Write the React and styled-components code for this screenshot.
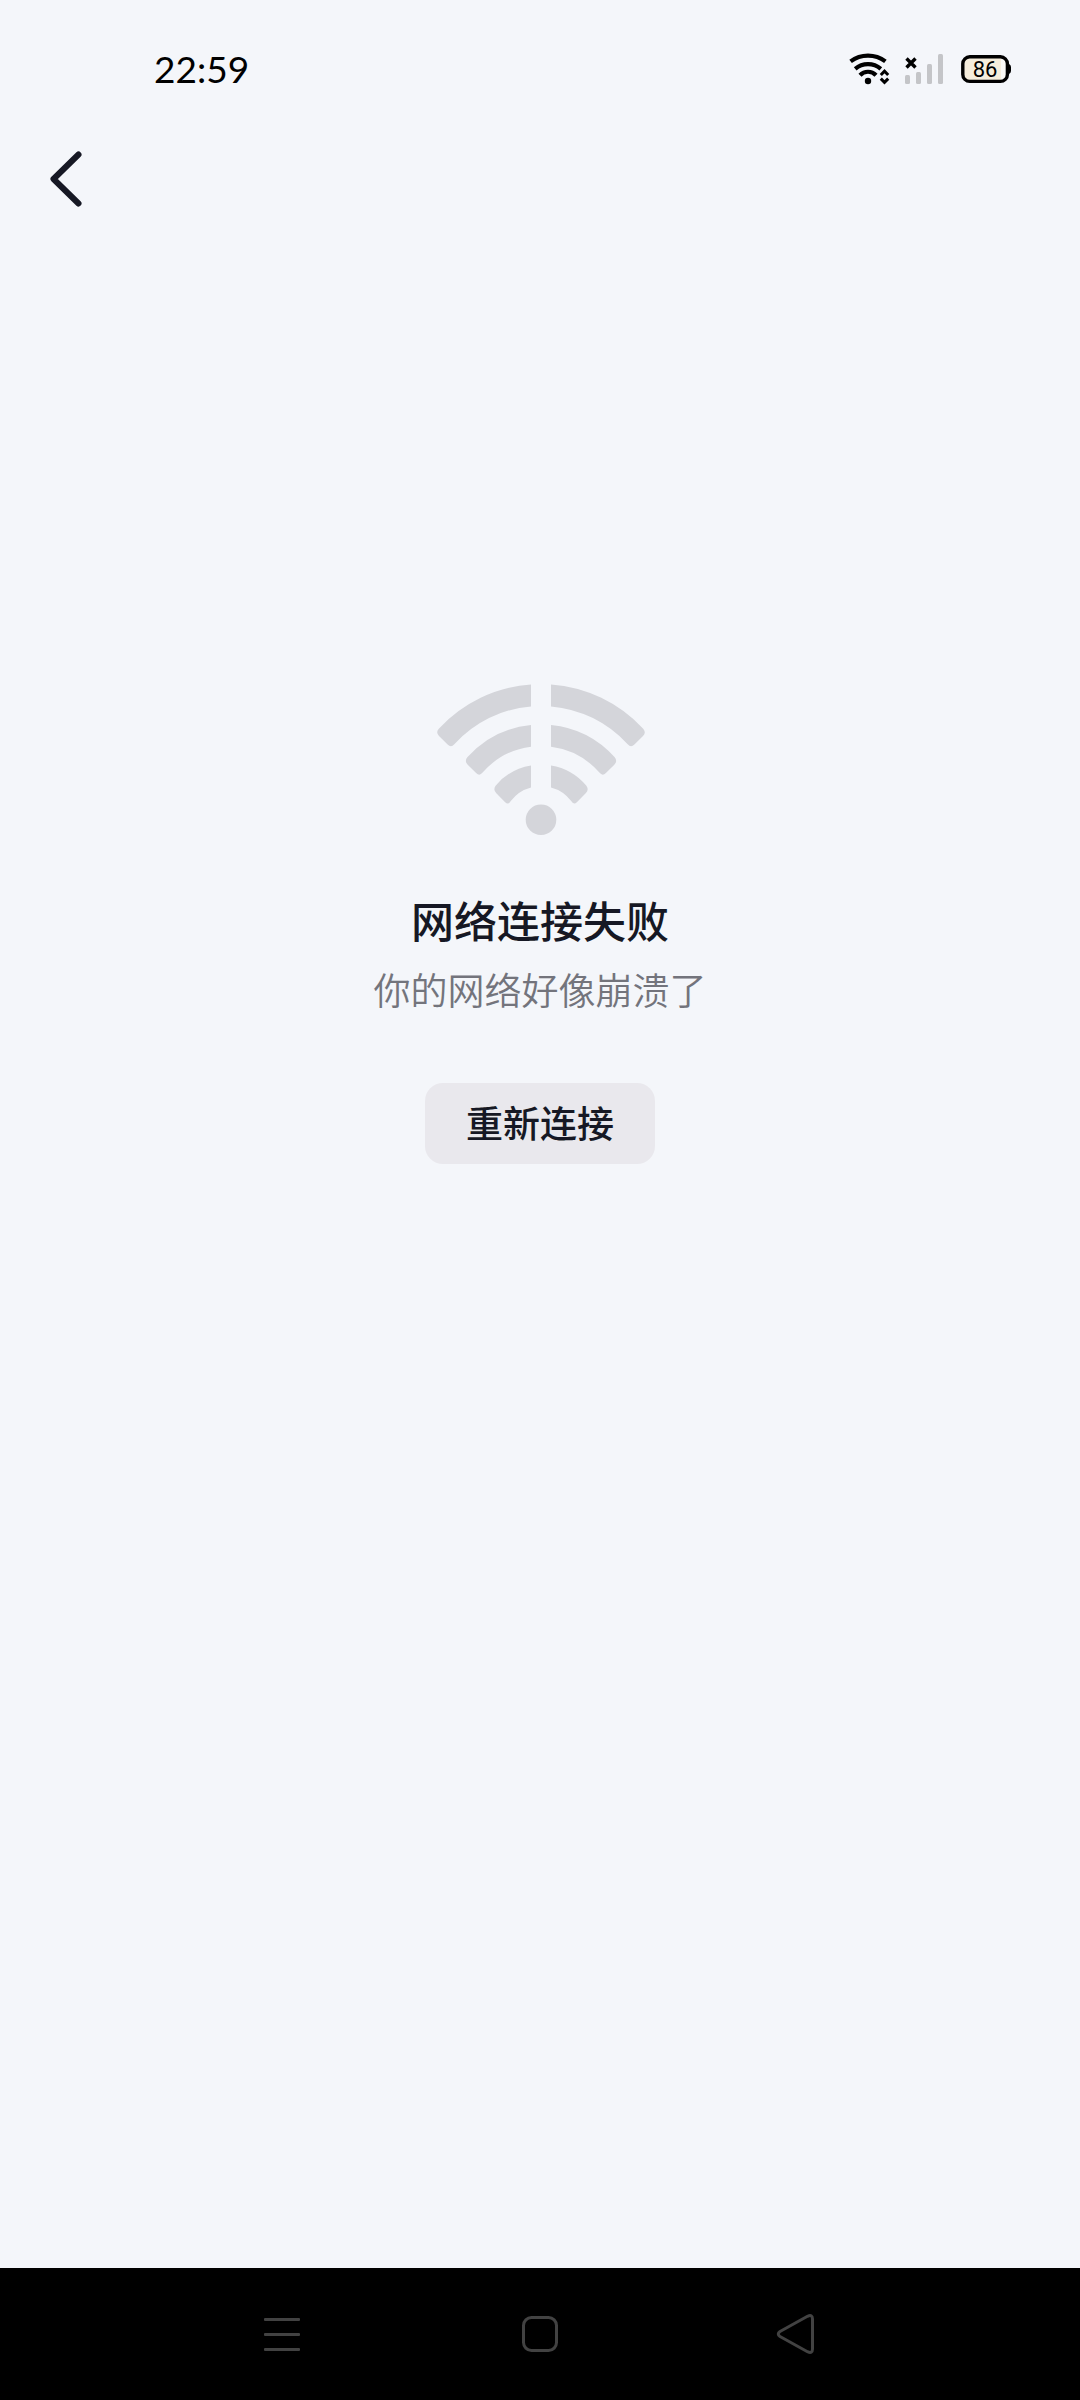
import React from 'react'
import styled, {createGlobalStyle} from 'styled-components'

const GlobalStyle = createGlobalStyle`
  * {
    box-sizing: border-box;
  }
  body {
    margin: 0;
    background: #f4f6fa;
    color: #161824;
    font-family: 'Noto Sans CJK SC', sans-serif;
  }
`

const Page = styled.div`
  min-height: 100vh;
  display: flex;
  flex-direction: column;
`

const StatusBar = styled.div`
  height: 138px;
  padding: 0 68px 0 154px;
  display: flex;
  align-items: center;
  justify-content: space-between;
`

const Clock = styled.time`
  color: #000;
  font-family: Lato, sans-serif;
  font-size: 37px;
  line-height: 44px;
`

const StatusIcons = styled.div`
  display: flex;
  align-items: center;
  gap: 16px;
`

const Icon = styled.svg`
  display: block;
  flex: none;
  overflow: visible;
`

const BatteryLevel = styled.text`
  font-family: Roboto, sans-serif;
  font-size: 22px;
  text-anchor: middle;
`

const Header = styled.header`
  height: 82px;
  padding: 0 36px;
  display: flex;
  align-items: center;
`

const IconButton = styled.button`
  border: 0;
  padding: 11px 12px;
  background: none;
  color: inherit;
  cursor: pointer;
`

const Main = styled.main`
  flex: 1;
  padding: 464px 24px 0;
  display: flex;
  flex-direction: column;
  align-items: center;
`

const Title = styled.h1`
  margin: 51px 0 0;
  font-size: 43px;
  line-height: 64px;
  font-weight: 500;
`

const Description = styled.p`
  margin: 10px 0 0;
  color: #73747c;
  font-size: 37px;
  line-height: 56px;
  font-weight: 350;
`

const RetryButton = styled.button`
  margin-top: 66px;
  border: 0;
  border-radius: 18px;
  padding: 11px 41px 14px;
  background: #e9e8ed;
  color: inherit;
  font-family: inherit;
  font-size: 37px;
  line-height: 56px;
  font-weight: 500;
  cursor: pointer;
`

const NavBar = styled.nav`
  height: 132px;
  padding: 0 153px;
  display: flex;
  background: #000;
`

const NavButton = styled.button`
  flex: 1;
  border: 0;
  padding: 0;
  display: flex;
  align-items: center;
  justify-content: center;
  background: none;
  color: #424242;
  cursor: pointer;
`

const WifiIcon = () => (
  <Icon width="40" height="32" viewBox="0 0 40 32" fill="none" stroke="#000">
    <g strokeWidth="4.2">
      <path d="M1.6 8.4A29 29 0 0 1 36.4 8.4" />
      <path d="M6.2 15.8A20 20 0 0 1 31.8 15.8" />
      <path d="M11 22.2A11 11 0 0 1 27 22.2" />
    </g>
    <circle cx="19" cy="28" r="3.2" fill="#000" stroke="none" />
    <path
      d="M31.8 22L35.5 18.2L39.2 22M31.8 25.6L35.5 29.4L39.2 25.6"
      stroke="#f4f6fa"
      strokeWidth="5"
    />
    <path
      d="M31.8 22L35.5 18.2L39.2 22M31.8 25.6L35.5 29.4L39.2 25.6"
      strokeWidth="3"
    />
  </Icon>
)

const SignalIcon = () => (
  <Icon width="38" height="32" viewBox="0 0 38 32">
    <g fill="#c4c5c8">
      <rect x="0" y="22" width="5" height="9" rx="1.5" />
      <rect x="11" y="19" width="5" height="12" rx="1.5" />
      <rect x="22" y="11" width="5" height="20" rx="1.5" />
      <rect x="33" y="1" width="5" height="30" rx="1.5" />
    </g>
    <path d="M1.5 5.5L10.5 14.5M10.5 5.5L1.5 14.5" stroke="#000" strokeWidth="3.4" />
  </Icon>
)

const BatteryIcon = () => (
  <Icon width="53" height="32" viewBox="-2 0 53 32">
    <rect x="1.8" y="3.8" width="44.6" height="24.6" rx="7" fill="#faf9f6" />
    <path d="M9 4H40V28H9Q3 28 3 22V10Q3 4 9 4Z" fill="#f5eddc" />
    <rect
      x="1.8"
      y="3.8"
      width="44.6"
      height="24.6"
      rx="7"
      fill="none"
      stroke="#000"
      strokeWidth="3.4"
    />
    <path d="M48 11Q50 12 50 14V18Q50 20 48 21Z" fill="#000" />
    <BatteryLevel x="24" y="24">
      86
    </BatteryLevel>
  </Icon>
)

const brokenWifiHalf = (
  <>
    <path d="M94 .4A139 139 0 0 0 1.8 44.7Q-1.5 48.5 2 52L10.6 60.6Q14.1 64.1 17.3 60.3A117 117 0 0 1 94 22.4Z" />
    <path d="M94 41A98.5 98.5 0 0 0 30.3 73.3Q27.2 77.2 30.7 80.7L39.1 89.1Q42.6 92.6 45.6 88.6A77 77 0 0 1 94 62.7Z" />
    <path d="M94 81.4A58.5 58.5 0 0 0 58.6 101.7Q55.8 105.8 59.3 109.3L67.9 117.9Q71.4 121.4 73.8 117A37 37 0 0 1 94 103.4Z" />
  </>
)

const BrokenWifi = () => (
  <Icon width="208" height="152" viewBox="-1 0 208 152" fill="#d4d5da" aria-hidden="true">
    {brokenWifiHalf}
    <g transform="translate(208 0) scale(-1 1)">{brokenWifiHalf}</g>
    <circle cx="104" cy="135.7" r="15.3" />
  </Icon>
)

const App = () => (
  <Page>
    <GlobalStyle />
    <StatusBar>
      <Clock>22:59</Clock>
      <StatusIcons>
        <WifiIcon />
        <SignalIcon />
        <BatteryIcon />
      </StatusIcons>
    </StatusBar>
    <Header>
      <IconButton aria-label="返回">
        <Icon width="36" height="60" viewBox="0 0 36 60" fill="none">
          <path
            d="M30.5 5.5L5.5 30L30.5 54.5"
            stroke="#161824"
            strokeWidth="6"
            strokeLinecap="round"
            strokeLinejoin="round"
          />
        </Icon>
      </IconButton>
    </Header>
    <Main>
      <BrokenWifi />
      <Title>网络连接失败</Title>
      <Description>你的网络好像崩溃了</Description>
      <RetryButton>重新连接</RetryButton>
    </Main>
    <NavBar>
      <NavButton aria-label="菜单">
        <Icon width="36" height="36" viewBox="0 0 36 36" fill="currentColor">
          <rect y="2" width="36" height="3" rx="1" />
          <rect y="17" width="36" height="3" rx="1" />
          <rect y="32" width="36" height="3" rx="1" />
        </Icon>
      </NavButton>
      <NavButton aria-label="主页">
        <Icon width="36" height="36" viewBox="0 0 36 36" fill="none">
          <rect
            x="1.5"
            y="1.5"
            width="33"
            height="33"
            rx="8"
            stroke="currentColor"
            strokeWidth="3"
          />
        </Icon>
      </NavButton>
      <NavButton aria-label="后退">
        <Icon width="42" height="40" viewBox="0 0 42 40" fill="none">
          <path
            d="M30.5 2.3Q35.5 0 35.5 5V35Q35.5 40 30.5 37.7L3 22.5Q-.5 20 3 17.5Z"
            stroke="currentColor"
            strokeWidth="3"
            strokeLinejoin="round"
          />
        </Icon>
      </NavButton>
    </NavBar>
  </Page>
)

export default App
